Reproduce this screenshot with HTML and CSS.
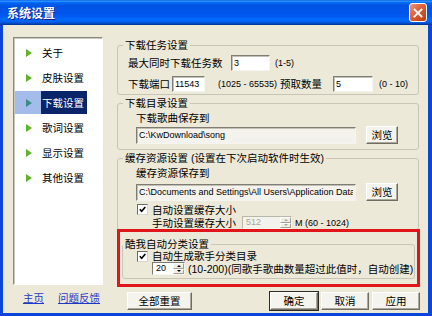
FILE: index.html
```html
<!DOCTYPE html>
<html lang="zh-CN">
<head>
<meta charset="utf-8">
<title>系统设置</title>
<link rel="stylesheet" href="styles.css">
</head>
<body>
<div class="window">
  <div class="titlebar">
    <span class="title">系统设置</span>
    <span class="close"><svg width="10" height="10" viewBox="0 0 10 10"><path d="M1.5 1.5L8.5 8.5M8.5 1.5L1.5 8.5" stroke="#fff" stroke-width="1.8" stroke-linecap="square"/></svg></span>
  </div>
  <div class="client">
    <div class="left">
      <ul class="nav">
        <li><span class="ico"><i class="tri"></i></span><span class="txt">关于</span></li>
        <li><span class="ico"><i class="tri"></i></span><span class="txt">皮肤设置</span></li>
        <li class="on"><span class="ico"><i class="tri"></i></span><span class="txt">下载设置</span></li>
        <li><span class="ico"><i class="tri"></i></span><span class="txt">歌词设置</span></li>
        <li><span class="ico"><i class="tri"></i></span><span class="txt">显示设置</span></li>
        <li><span class="ico"><i class="tri"></i></span><span class="txt">其他设置</span></li>
      </ul>
      <div class="links"><a href="#">主页</a><a href="#">问题反馈</a></div>
    </div>
    <div class="right">
      <fieldset class="group g1">
        <legend>下载任务设置</legend>
        <div class="gbody">
          <div class="row">
            <span class="max-label">最大同时下载任务数</span>
            <input class="tb tb-tasks" value="3" readonly>
            <span class="lat range-tasks">(1-5)</span>
          </div>
          <div class="row">
            <span class="port-label">下载端口</span>
            <input class="tb tb-port" value="11543" readonly>
            <span class="lat range-port">(1025 - 65535)</span>
            <span class="prefetch-label">预取数量</span>
            <input class="tb tb-prefetch" value="5" readonly>
            <span class="lat range-prefetch">(0 - 10)</span>
          </div>
        </div>
      </fieldset>

      <fieldset class="group g2">
        <legend>下载目录设置</legend>
        <div class="gbody">
          <div class="path-label">下载歌曲保存到</div>
          <div class="path-row">
            <input class="tb path" value="C:\KwDownload\song" readonly>
            <button class="btn browse">浏览</button>
          </div>
        </div>
      </fieldset>

      <fieldset class="group g3">
        <legend>缓存资源设置 (设置在下次启动软件时生效)</legend>
        <div class="gbody">
          <div class="path-label">缓存资源保存到</div>
          <div class="path-row">
            <input class="tb path" value="C:\Documents and Settings\All Users\Application Data\KwMusic" readonly>
            <button class="btn browse">浏览</button>
          </div>
          <div class="check-row">
            <span class="cb"><svg width="7" height="7" viewBox="0 0 7 7"><path d="M0.8 3.2L2.7 5.2L6.3 1" fill="none" stroke="#000" stroke-width="1.6"/></svg></span>
            <span>自动设置缓存大小</span>
          </div>
          <div class="cache-row">
            <span class="cache-label">手动设置缓存大小</span>
            <span class="spin spin-cache disabled"><span class="spin-val">512</span><span class="spin-btns"><span class="sb"><i class="up"></i></span><span class="sb"><i class="dn"></i></span></span></span>
            <span class="lat unit">M (60 - 1024)</span>
          </div>
        </div>
      </fieldset>

      <div class="highlight">
        <fieldset class="group g4">
          <legend>酷我自动分类设置</legend>
          <div class="gbody">
            <div class="check-row">
              <span class="cb"><svg width="7" height="7" viewBox="0 0 7 7"><path d="M0.8 3.2L2.7 5.2L6.3 1" fill="none" stroke="#000" stroke-width="1.6"/></svg></span>
              <span>自动生成歌手分类目录</span>
            </div>
            <div class="singer-row">
              <span class="spin spin-singer"><span class="spin-val">20</span><span class="spin-btns"><span class="sb"><i class="up"></i></span><span class="sb"><i class="dn"></i></span></span></span>
              <span class="singer-hint">(10-200)(同歌手歌曲数量超过此值时，自动创建)</span>
            </div>
          </div>
        </fieldset>
      </div>

      <div class="actions">
        <button class="btn reset">全部重置</button>
        <div class="dialog-buttons">
          <button class="btn ok">确定</button>
          <button class="btn">取消</button>
          <button class="btn">应用</button>
        </div>
      </div>
    </div>
  </div>
</div>
</body>
</html>
```

FILE: styles.css
```css
* { box-sizing: border-box; }
body { margin: 0; background: #fff; }

.window {
  width: 432px;
  height: 316px;
  display: flex;
  flex-direction: column;
  background: #0B46DA;
  font-family: "Liberation Sans", "Noto Sans CJK SC", sans-serif;
  font-size: 10.5px;
  line-height: 12px;
  color: #000;
}

.titlebar {
  height: 25px;
  flex: none;
  display: flex;
  align-items: center;
  padding: 0 5px 0 7px;
  background: linear-gradient(to bottom, #0058EE 0%, #3593FF 4%, #288EFF 6%, #127DFF 8%, #036FFC 10%, #0262EE 14%, #0057E5 20%, #0054E3 24%, #0055EB 56%, #005BF5 66%, #026AFE 76%, #0062EF 86%, #0052D6 92%, #0040AB 96%, #003092 100%);
}
.title {
  color: #fff;
  font-family: "Noto Sans CJK SC", sans-serif;
  font-weight: bold;
  font-size: 12px;
  text-shadow: 1px 1px 0 #0A1E8C;
}
.close {
  margin-left: auto;
  width: 18px;
  height: 19px;
  border: 1px solid #fff;
  border-radius: 3px;
  background: linear-gradient(135deg, #F09A7C 0%, #E06A44 35%, #CC4A20 75%, #B83A14 100%);
  display: flex;
  align-items: center;
  justify-content: center;
}

.client {
  flex: 1;
  margin: 0 4px 3px 3px;
  background: #ECE9D8;
  display: flex;
}

/* left navigation */
.left {
  width: 100px;
  flex: none;
  padding: 12px 0 0 10px;
}
.nav {
  width: 90px;
  height: 248px;
  margin: 0;
  padding: 2px 0 0;
  list-style: none;
  background: #fff;
  border: 1px solid;
  border-color: #8C8A7E #FFFFFF #FFFFFF #8C8A7E;
  box-shadow: inset 1px 1px 0 #C9C7BB;
}
.nav li {
  display: flex;
  height: 25px;
  align-items: center;
}
.ico {
  width: 26px;
  height: 23px;
  margin-left: 1px;
  padding-left: 11px;
  display: flex;
  align-items: center;
}
.tri {
  width: 0;
  height: 0;
  border-left: 6px solid #62B22E;
  border-top: 4.5px solid transparent;
  border-bottom: 4.5px solid transparent;
}
.txt {
  height: 23px;
  display: flex;
  align-items: center;
  padding: 0 3px 0 1px;
}
.nav .on .ico { background: #A3BCEA; }
.nav .on .txt { background: #0A246A; color: #fff; }
.nav .on .tri { border-left-color: #3C8C86; }

.links {
  display: flex;
  align-items: center;
  height: 14px;
  margin-top: 6px;
  padding-left: 10px;
}
.links a { color: #1D38C7; text-decoration: underline; }
.links a + a { margin-left: 14px; }

/* right panel */
.right {
  width: 303px;
  flex: none;
  margin-left: 14px;
  padding-top: 14px;
  display: flex;
  flex-direction: column;
}
fieldset.group {
  margin: 0 1px 0 0;
  padding: 0;
  min-width: 0;
  border: 1px solid #C8C5B6;
  border-radius: 3px;
}
.group + .group { margin-top: 2px; }
.group legend {
  margin-left: 5px;
  padding: 0 2px;
  line-height: 12px;
}
.gbody { display: flex; flex-direction: column; }
.row { display: flex; align-items: center; height: 16px; white-space: nowrap; }
.lat { font-family: "Liberation Sans", sans-serif; font-size: 9px; white-space: nowrap; }

.tb {
  height: 16px;
  margin: 0;
  padding: 0 2px;
  border: 1px solid;
  border-color: #7F7D71 #F5F4EF #F5F4EF #7F7D71;
  box-shadow: inset 1px 1px 0 #C3C1B5;
  background: #fff;
  font-family: "Liberation Sans", sans-serif;
  font-size: 9px;
  color: #000;
  outline: none;
}

.g1 .gbody { padding: 4px 0 2px 10px; gap: 5px; }
.max-label { width: 103px; }
.tb-tasks { width: 39px; }
.range-tasks { margin-left: 5px; }
.port-label { width: 44px; }
.tb-port { width: 33px; }
.range-port { width: 62px; margin-left: 13px; }
.prefetch-label { width: 53px; }
.tb-prefetch { width: 40px; }
.range-prefetch { margin-left: 6px; }

.g2 .gbody { padding: 3px 0 5px 18px; }
.g3 .gbody { padding: 3px 0 0 18px; }
.path-label { line-height: 12px; }
.path-row { display: flex; align-items: center; height: 18px; margin-top: 2px; }
.g3 .path-row { margin-top: 4px; }
.path { width: 220px; height: 17px; background: #F3F2EC; }

.btn {
  height: 18px;
  margin: 0;
  padding: 0;
  font-family: "Noto Sans CJK SC", sans-serif;
  font-size: 10.5px;
  line-height: 12px;
  color: #000;
  background: #F4F3EE;
  border: 1px solid;
  border-color: #FFFFFF #6F6D62 #6F6D62 #FFFFFF;
  box-shadow: inset -1px -1px 0 #ACA899;
}
.browse { width: 32px; margin-left: 10px; }

.check-row { display: flex; align-items: center; height: 13px; margin-top: 2px; }
.g3 .check-row { padding-left: 1px; }
.cb {
  width: 11px;
  height: 11px;
  margin-right: 4px;
  background: #fff;
  border: 1px solid;
  border-color: #6E6C61 #D8D6CA #D8D6CA #6E6C61;
  display: flex;
  align-items: center;
  justify-content: center;
}
.cache-row { display: flex; align-items: center; height: 13px; padding-left: 16px; }
.cache-label { width: 90px; }
.unit { margin-left: 3px; }

.spin {
  display: flex;
  height: 13px;
  background: #fff;
  border: 1px solid;
  border-color: #7F7D71 #F5F4EF #F5F4EF #7F7D71;
}
.spin-val {
  flex: 1;
  padding-left: 3px;
  font-family: "Liberation Sans", sans-serif;
  font-size: 9px;
  line-height: 11px;
}
.spin-btns { width: 11px; display: flex; flex-direction: column; }
.sb {
  flex: 1;
  display: flex;
  align-items: center;
  justify-content: center;
  background: #EEEDE6;
  border: 1px solid;
  border-color: #FFFFFF #A3A193 #A3A193 #FFFFFF;
}
.up, .dn {
  width: 0;
  height: 0;
  border-left: 2px solid transparent;
  border-right: 2px solid transparent;
}
.up { border-bottom: 2px solid #000; }
.dn { border-top: 2px solid #000; }
.spin.disabled { background: #F3F2EC; color: #A8A696; border-color: #B9B7AA #F5F4EF #F5F4EF #B9B7AA; }
.spin.disabled .up { border-bottom-color: #A8A696; }
.spin.disabled .dn { border-top-color: #A8A696; }
.spin-cache { width: 50px; }
.spin-singer { width: 33px; }

.highlight {
  border: 3px solid #E0161B;
  margin-top: -1px;
  padding: 6px 2px 5px 2px;
}
.highlight fieldset.group { margin: 0; }
.g4 legend { margin-left: 0; }
.g4 .gbody { padding: 0 0 3px 14px; }
.g4 .check-row { height: 12px; margin-top: 0; }
.singer-row { display: flex; align-items: center; height: 13px; padding-left: 15px; }
.singer-hint { margin-left: 3px; white-space: nowrap; }

.actions { display: flex; height: 18px; margin-top: 5px; }
.reset { width: 65px; margin-left: 10px; }
.dialog-buttons { margin-left: auto; display: flex; gap: 3px; }
.dialog-buttons .btn { width: 48px; }
.ok { box-shadow: inset -1px -1px 0 #ACA899, 0 0 0 1px #2B2A26; }
```
